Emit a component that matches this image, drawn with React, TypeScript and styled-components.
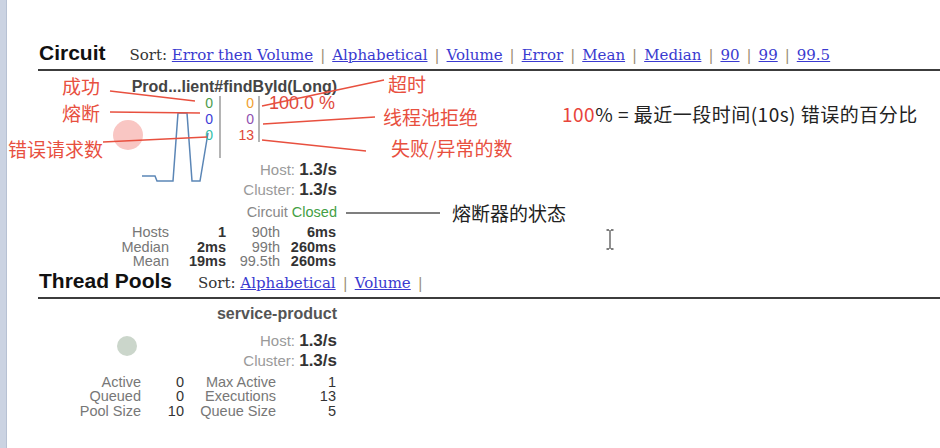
import React from "react";
import styled, { createGlobalStyle } from "styled-components";

const GlobalStyle = createGlobalStyle`
  html, body { margin: 0; padding: 0; background: #fff; }
  body {
    font-family: "Liberation Sans", Arial, sans-serif;
    width: 940px;
    height: 448px;
    overflow: hidden;
  }
`;

const SANS = `"Liberation Sans", Arial, sans-serif`;
const SERIF = `"DejaVu Serif", "Liberation Serif", serif`;
const CJK = `"Noto Sans CJK SC", "Noto Sans", sans-serif`;

const Page = styled.div`
  position: relative;
  display: flex;
  width: 940px;
  height: 448px;
  overflow: hidden;
  background: #fff;
`;

const EdgeStrip = styled.div`
  flex: none;
  width: 6px;
  background: #cbd3e2;
  border-right: 1px solid #b7c1d3;
`;

const Main = styled.main`
  flex: 1;
  padding: 41px 0 0 31px;
`;

const SectionHeader = styled.div`
  display: flex;
  align-items: baseline;
  height: 24px;
  padding: 0 0 4px 1px;
  border-bottom: 2px solid #3c3c3c;
`;

const SectionTitle = styled.h2`
  margin: 0;
  font: bold 21px/24px ${SANS};
  color: #111;
`;

const SortBar = styled.div<{ $offset: number }>`
  margin-left: ${(p) => p.$offset}px;
  font: 15px/24px ${SERIF};
  color: #333;
  white-space: nowrap;
`;

const SortLink = styled.a`
  color: #3a3ad0;
  text-decoration: underline;
  cursor: pointer;
`;

const Sep = styled.span`
  padding: 0 7px;
  color: #9a8b72;
`;

const Card = styled.div`
  width: 298px;
  margin-left: 1px;
`;

const CardTitle = styled.div<{ $top: number; $color: string }>`
  margin-top: ${(p) => p.$top}px;
  text-align: right;
  font: bold 16px/16px ${SANS};
  color: ${(p) => p.$color};
  white-space: nowrap;
`;

const ChartStack = styled.div`
  display: grid;
  & > * { grid-area: 1 / 1; }
`;

const ChartSvg = styled.svg`
  display: block;
  pointer-events: none;
`;

const RightCol = styled.div<{ $left: number }>`
  margin-left: ${(p) => p.$left}px;
  display: flex;
  flex-direction: column;
`;

const Counters = styled.div`
  display: flex;
  align-items: flex-start;
  height: 63px;
`;

const CounterCol = styled.div<{ $w: number }>`
  width: ${(p) => p.$w}px;
  text-align: right;
  font: 14px/16px ${SANS};
`;

const Count = styled.div<{ $c: string }>`
  color: ${(p) => p.$c};
`;

const Divider = styled.div<{ $h: number; $ml: number }>`
  width: 2px;
  height: ${(p) => p.$h}px;
  margin-left: ${(p) => p.$ml}px;
  margin-top: 1px;
  background: #b4b4b4;
`;

const ErrorPct = styled.div`
  margin-left: 9px;
  font: 18px/16px ${SANS};
  color: #e04a3c;
  white-space: nowrap;
`;

const RateRow = styled.div<{ $mt?: number }>`
  margin-top: ${(p) => p.$mt ?? 0}px;
  text-align: right;
  line-height: 20px;
  white-space: nowrap;
`;

const RateLabel = styled.span`
  font-size: 15px;
  color: #9a9a9a;
`;

const RateValue = styled.span`
  font-size: 17px;
  font-weight: bold;
  color: #333;
`;

const StatusRow = styled.div`
  margin-top: 2px;
  text-align: right;
  font: 14.5px/20px ${SANS};
  color: #888;
  white-space: nowrap;
`;

const StatusWord = styled.span`
  color: #44a044;
`;

const StatsGrid = styled.div<{ $cols: string; $mt: number }>`
  display: grid;
  grid-template-columns: ${(p) => p.$cols};
  margin-top: ${(p) => p.$mt}px;
  font: 14.5px/14.5px ${SANS};
  white-space: nowrap;
`;

const StatLabel = styled.span`
  text-align: right;
  color: #777;
`;

const StatValue = styled.span<{ $bold?: boolean }>`
  text-align: right;
  color: #333;
  font-weight: ${(p) => (p.$bold ? "bold" : "normal")};
`;

const Overlay = styled.svg`
  position: absolute;
  left: 0;
  top: 0;
  width: 940px;
  height: 448px;
  pointer-events: none;
`;

const Note = styled.span<{ $x: number; $y: number; $c: string; $ls?: number }>`
  position: absolute;
  left: ${(p) => p.$x}px;
  top: ${(p) => p.$y}px;
  font: 19px/20px ${CJK};
  letter-spacing: ${(p) => p.$ls ?? 0}px;
  color: ${(p) => p.$c};
  white-space: nowrap;
`;

const Red = styled.span`
  color: #e8453c;
`;

const RED = "#e8503f";

const circuitSorts = ["Error then Volume", "Alphabetical", "Volume", "Error", "Mean", "Median", "90", "99", "99.5"];
const poolSorts = ["Alphabetical", "Volume"];

function Sorts({ items, trailing }: { items: string[]; trailing?: boolean }) {
  return (
    <>
      {items.map((s, i) => (
        <React.Fragment key={s}>
          {i > 0 && <Sep>|</Sep>}
          <SortLink>{s}</SortLink>
        </React.Fragment>
      ))}
      {trailing && <Sep>|</Sep>}
    </>
  );
}

export default function App() {
  return (
    <Page>
      <GlobalStyle />
      <EdgeStrip />
      <Main>
        <SectionHeader>
          <SectionTitle>Circuit</SectionTitle>
          <SortBar $offset={24}>
            Sort: <Sorts items={circuitSorts} />
          </SortBar>
        </SectionHeader>

        <Card>
          <CardTitle $top={8} $color="#444">Prod...lient#findById(Long)</CardTitle>
          <ChartStack>
            <ChartSvg width="298" height="110" viewBox="0 0 298 110">
              <circle cx="89" cy="40" r="15" fill="#f9c6c3" />
              <polyline
                points="103,81 116,81 118,86 134,86 139,18 148,18 153,86 161,86 169,38"
                fill="none"
                stroke="#5b86b6"
                strokeWidth="1.5"
              />
            </ChartSvg>
            <RightCol $left={161}>
              <Counters>
                <CounterCol $w={13}>
                  <Count $c="#4c9c4c">0</Count>
                  <Count $c="#3c3cd8">0</Count>
                  <Count $c="#33bfa8">0</Count>
                </CounterCol>
                <Divider $h={62} $ml={6} />
                <CounterCol $w={33}>
                  <Count $c="#f0a030">0</Count>
                  <Count $c="#9050b0">0</Count>
                  <Count $c="#e04838">13</Count>
                </CounterCol>
                <Divider $h={46} $ml={4} />
                <ErrorPct>100.0 %</ErrorPct>
              </Counters>
              <RateRow $mt={2}>
                <RateLabel>Host: </RateLabel>
                <RateValue>1.3/s</RateValue>
              </RateRow>
              <RateRow>
                <RateLabel>Cluster: </RateLabel>
                <RateValue>1.3/s</RateValue>
              </RateRow>
              <StatusRow>
                Circuit <StatusWord>Closed</StatusWord>
              </StatusRow>
            </RightCol>
          </ChartStack>
          <StatsGrid $cols="130px 57px 54px 56px" $mt={3}>
            <StatLabel>Hosts</StatLabel>
            <StatValue $bold>1</StatValue>
            <StatLabel>90th</StatLabel>
            <StatValue $bold>6ms</StatValue>
            <StatLabel>Median</StatLabel>
            <StatValue $bold>2ms</StatValue>
            <StatLabel>99th</StatLabel>
            <StatValue $bold>260ms</StatValue>
            <StatLabel>Mean</StatLabel>
            <StatValue $bold>19ms</StatValue>
            <StatLabel>99.5th</StatLabel>
            <StatValue $bold>260ms</StatValue>
          </StatsGrid>
        </Card>

        <SectionHeader>
          <SectionTitle>Thread Pools</SectionTitle>
          <SortBar $offset={26}>
            Sort: <Sorts items={poolSorts} trailing />
          </SortBar>
        </SectionHeader>

        <Card>
          <CardTitle $top={7} $color="#555">service-product</CardTitle>
          <ChartStack>
            <ChartSvg width="298" height="48" viewBox="0 0 298 48">
              <circle cx="88" cy="24" r="10" fill="#cbd6cb" />
            </ChartSvg>
            <RightCol $left={100}>
              <RateRow $mt={9}>
                <RateLabel>Host: </RateLabel>
                <RateValue>1.3/s</RateValue>
              </RateRow>
              <RateRow>
                <RateLabel>Cluster: </RateLabel>
                <RateValue>1.3/s</RateValue>
              </RateRow>
            </RightCol>
          </ChartStack>
          <StatsGrid $cols="102px 43px 92px 60px" $mt={4}>
            <StatLabel>Active</StatLabel>
            <StatValue>0</StatValue>
            <StatLabel>Max Active</StatLabel>
            <StatValue>1</StatValue>
            <StatLabel>Queued</StatLabel>
            <StatValue>0</StatValue>
            <StatLabel>Executions</StatLabel>
            <StatValue>13</StatValue>
            <StatLabel>Pool Size</StatLabel>
            <StatValue>10</StatValue>
            <StatLabel>Queue Size</StatLabel>
            <StatValue>5</StatValue>
          </StatsGrid>
        </Card>
      </Main>

      <Overlay viewBox="0 0 940 448">
        <g stroke={RED} strokeWidth="1.4" fill="none">
          <line x1="110" y1="91" x2="195" y2="101" />
          <line x1="110" y1="112" x2="200" y2="113" />
          <line x1="103" y1="142" x2="207" y2="137" />
          <line x1="262" y1="106" x2="384" y2="80" />
          <line x1="263" y1="124" x2="375" y2="117" />
          <line x1="262" y1="140" x2="366" y2="151" />
        </g>
        <line x1="346" y1="213" x2="440" y2="213" stroke="#555" strokeWidth="1.6" />
        <g stroke="#555" strokeWidth="1.3" fill="none">
          <line x1="610" y1="230" x2="610" y2="249" />
          <path d="M606.5 230 L609 230 M611 230 L613.5 230 M606.5 249 L609 249 M611 249 L613.5 249" />
        </g>
      </Overlay>

      <Note $x={62} $y={76} $c={RED}>成功</Note>
      <Note $x={62} $y={103} $c={RED}>熔断</Note>
      <Note $x={8} $y={139} $c={RED}>错误请求数</Note>
      <Note $x={388} $y={74} $c={RED}>超时</Note>
      <Note $x={383} $y={107} $c={RED}>线程池拒绝</Note>
      <Note $x={391} $y={138} $c={RED}>失败/异常的数</Note>
      <Note $x={562} $y={104} $c="#222" $ls={0.5}>
        <Red>100</Red>% = 最近一段时间(10s) 错误的百分比
      </Note>
      <Note $x={452} $y={203} $c="#222">熔断器的状态</Note>
    </Page>
  );
}
